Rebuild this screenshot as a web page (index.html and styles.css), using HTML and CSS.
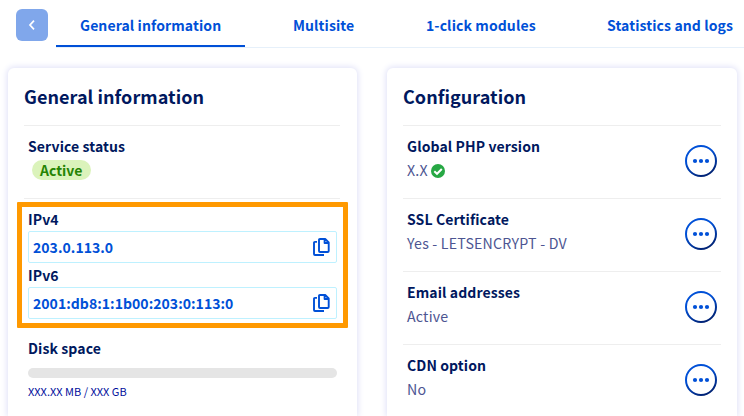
FILE: index.html
```html
<!DOCTYPE html>
<html lang="en">
<head>
<meta charset="utf-8">
<title>General information</title>
<link rel="stylesheet" href="styles.css">
</head>
<body>
<svg class="defs" width="0" height="0" aria-hidden="true">
  <linearGradient id="ring" x1="0.2" y1="0" x2="0.7" y2="1">
    <stop offset="0.35" stop-color="#0050d7"/>
    <stop offset="1" stop-color="#002070"/>
  </linearGradient>
  <symbol id="copy" viewBox="0 0 17 18">
    <path d="M4 3.9H2Q1 3.9 1 4.9V16Q1 17 2 17H11" fill="none" stroke="#0050d7" stroke-width="1.9"/>
    <path d="M7 1H12.2L15.7 4.5V13Q15.7 14 14.7 14H7Q6 14 6 13V2Q6 1 7 1ZM11.6 1V5H15.7" fill="none" stroke="#0050d7" stroke-width="1.9" stroke-linejoin="round"/>
  </symbol>
  <symbol id="more" viewBox="0 0 32 32">
    <circle cx="16" cy="16" r="15" fill="#fff" stroke="url(#ring)" stroke-width="2"/>
    <g fill="#0050d7"><circle cx="10" cy="16" r="2.1"/><circle cx="16" cy="16" r="2.1"/><circle cx="22" cy="16" r="2.1"/></g>
  </symbol>
</svg>
<nav class="nav">
  <button class="back" aria-label="Back"><svg width="8" height="12" viewBox="0 0 8 12"><path d="M6 1.7L2 6L6 10.3" fill="none" stroke="#fff" stroke-width="1.7"/></svg></button>
  <div class="tabs">
    <a class="tab active">General information</a>
    <a class="tab w-multi">Multisite</a>
    <a class="tab w-click">1-click modules</a>
    <a class="tab w-stats">Statistics and logs</a>
  </div>
</nav>
<main class="cards">
  <section class="card">
    <h2>General information</h2>
    <div class="row">
      <div><h3>Service status</h3><span class="badge">Active</span></div>
    </div>
    <div class="row ips">
      <h3>IPv4</h3>
      <div class="field"><span>203.0.113.0</span><svg width="17" height="18"><use href="#copy"/></svg></div>
      <h3>IPv6</h3>
      <div class="field"><span>2001:db8:1:1b00:203:0:113:0</span><svg width="17" height="18"><use href="#copy"/></svg></div>
      <div class="highlight"></div>
    </div>
    <div class="row disk">
      <h3>Disk space</h3>
      <div class="bar"></div>
      <small>XXX.XX MB / XXX GB</small>
    </div>
  </section>
  <section class="card config">
    <h2>Configuration</h2>
    <div class="row">
      <div><h3>Global PHP version</h3><p>X.X <svg class="check" width="14" height="14" viewBox="0 0 14 14"><circle cx="7" cy="7" r="7" fill="#27a844"/><path d="M3.3 7.2L6 9.8L10.8 5" fill="none" stroke="#fff" stroke-width="2"/></svg></p></div>
      <svg class="more" width="32" height="32"><use href="#more"/></svg>
    </div>
    <div class="row">
      <div><h3>SSL Certificate</h3><p>Yes - LETSENCRYPT - DV</p></div>
      <svg class="more" width="32" height="32"><use href="#more"/></svg>
    </div>
    <div class="row">
      <div><h3>Email addresses</h3><p>Active</p></div>
      <svg class="more" width="32" height="32"><use href="#more"/></svg>
    </div>
    <div class="row last">
      <div><h3>CDN option</h3><p>No</p></div>
      <svg class="more" width="32" height="32"><use href="#more"/></svg>
    </div>
  </section>
</main>
</body>
</html>
```
FILE: styles.css
```css
* { box-sizing: border-box; margin: 0; }
body {
  height: 416px;
  overflow: hidden;
  background: #fff;
  color: #00185e;
  font: 14px/24px "Noto Sans CJK SC", sans-serif;
  white-space: nowrap;
}
.defs { position: absolute; }
.nav { display: flex; gap: 8px; height: 48px; padding: 9px 0 0 16px; }
.back {
  display: grid;
  place-items: center;
  flex: none;
  width: 32px;
  height: 32px;
  padding: 0;
  border: 0;
  border-radius: 6px;
  background: #80a7eb;
}
.tabs { display: flex; flex: 1; gap: 24px; height: 39px; border-bottom: 1px solid #e6f0fa; }
.tab {
  flex: none;
  height: 38px;
  padding: 4px 24px 0;
  color: #0050d7;
  font-weight: 700;
  letter-spacing: 0.1px;
}
.active { width: 189px; border-bottom: 2px solid #0050d7; }
.w-multi { width: 109px; }
.w-click { width: 157px; }
.cards { display: flex; gap: 30px; padding: 20px 7px 0 8px; }
.card {
  flex: none;
  width: 349px;
  height: 348px;
  padding: 13px 17px 0 16px;
  border-radius: 6px 6px 0 0;
  background: #fff;
  box-shadow: 0 0 6px 1px #dfe0f7;
}
.config { width: 350px; padding-right: 16px; }
h2 { height: 44px; font-size: 18px; line-height: 30px; letter-spacing: 0.05px; }
h3 { font-size: 14px; line-height: 24px; font-weight: 700; letter-spacing: 0.1px; }
.row {
  display: flex;
  justify-content: space-between;
  height: 73px;
  padding: 8px 4px 0;
  border-top: 1px solid #eee;
}
.last { height: 72px; }
.row p { color: #4d5592; font-size: 14.2px; letter-spacing: 0.2px; }
.check { display: inline-block; vertical-align: -2px; margin-left: -0.5px; }
.more { margin: 11px 0 0; }
.badge {
  display: block;
  width: 59px;
  height: 20px;
  margin: 2px 0 0 4px;
  padding-left: 8px;
  border-radius: 10px;
  background: #dbf3bb;
  color: #268403;
  font-weight: 700;
  line-height: 20px;
}
.ips { position: relative; display: block; height: 129px; }
.field {
  display: flex;
  align-items: center;
  justify-content: space-between;
  width: 309px;
  height: 32px;
  padding: 0 6px 0 4px;
  border: 1px solid #bef1ff;
  border-radius: 2px;
  color: #0050d7;
  font-weight: 700;
  letter-spacing: 0.04px;
}
.highlight {
  position: absolute;
  left: -7px;
  top: 3px;
  width: 331px;
  height: 126px;
  border: 5px solid #ff9900;
  border-radius: 1px;
}
.disk { display: block; }
.bar { width: 309px; height: 10px; margin-top: 8px; border-radius: 5px; background: #e5e5e5; }
small { display: block; margin-top: 4px; color: #000e9c; font-size: 11px; line-height: 18px; }
```
